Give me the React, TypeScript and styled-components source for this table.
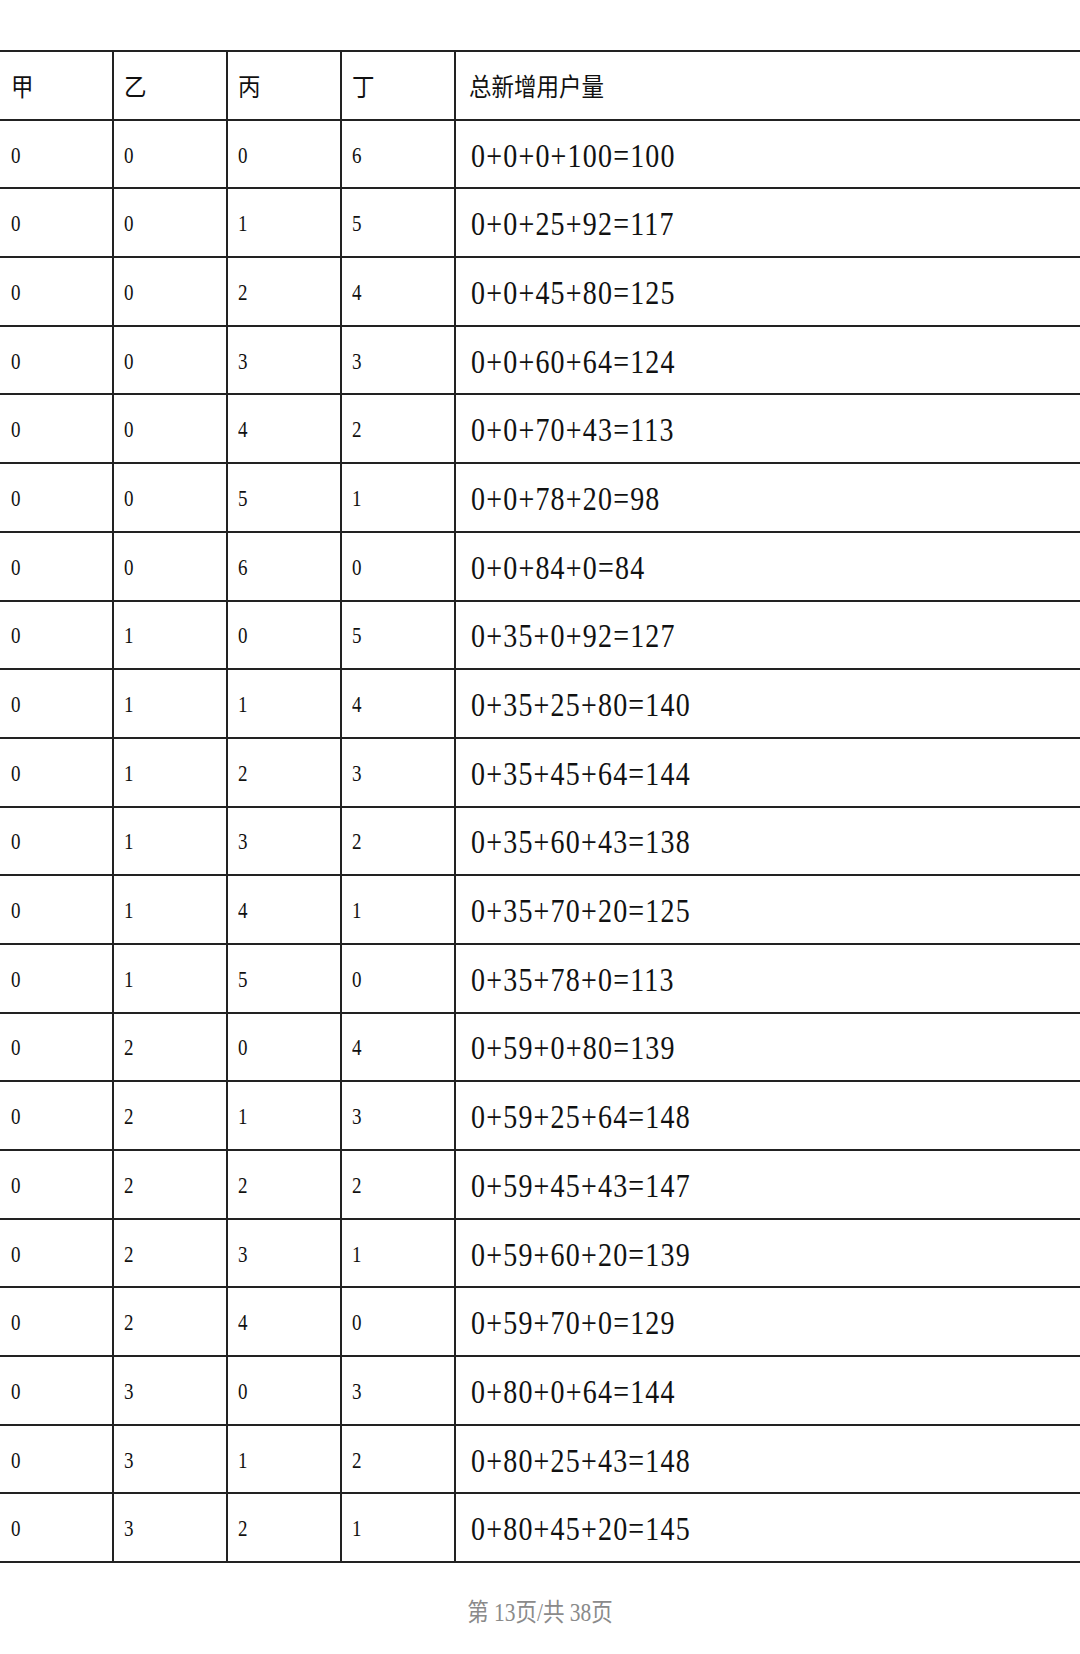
import styled, { createGlobalStyle } from 'styled-components'

const GlobalStyle = createGlobalStyle`
  html, body {
    margin: 0;
    padding: 0;
    background: #ffffff;
  }
  body {
    font-family: "Liberation Serif", "Noto Sans CJK SC", serif;
    color: #111;
  }
`

const Page = styled.div`
  width: 1080px;
  height: 1654px;
  overflow: hidden;
  padding-top: 50px;
  box-sizing: border-box;
`

const Table = styled.div`
  display: grid;
  grid-template-columns: 112px 114px 114px 114px 1fr;
  border-top: 2px solid #222;
`

const Row = styled.div`
  display: contents;
`

const Cell = styled.div<{ $wide?: boolean; $first?: boolean; $head?: boolean }>`
  height: 68.7px;
  box-sizing: border-box;
  border-bottom: 2px solid #222;
  border-left: ${(p) => (p.$first ? 'none' : '2px solid #222')};
  display: flex;
  align-items: center;
  padding-left: ${(p) => (p.$wide ? (p.$head ? '13px' : '15px') : p.$first ? '11px' : '10px')};
  padding-top: ${(p) => (p.$head ? '0' : '3px')};
`

const HeadText = styled.span`
  display: inline-block;
  font-family: "Noto Sans CJK SC", sans-serif;
  font-size: 22.5px;
  transform: scaleY(1.12);
  color: #111;
`

const Num = styled.span`
  display: inline-block;
  font-family: "Liberation Serif", serif;
  font-size: 19px;
  transform: scaleY(1.2);
  color: #111;
`

const Formula = styled.span`
  display: inline-block;
  font-family: "Liberation Serif", serif;
  font-size: 28px;
  letter-spacing: 1.2px;
  transform: scaleY(1.2);
  color: #111;
`

const Footer = styled.div`
  margin-top: 32px;
  text-align: center;
  font-family: "Liberation Serif", "Noto Sans CJK SC", serif;
  font-size: 21.5px;
  color: #8a8a8a;
  transform: scaleY(1.15);
`

const rows: [number, number, number, number, string][] = [
  [0, 0, 0, 6, '0+0+0+100=100'],
  [0, 0, 1, 5, '0+0+25+92=117'],
  [0, 0, 2, 4, '0+0+45+80=125'],
  [0, 0, 3, 3, '0+0+60+64=124'],
  [0, 0, 4, 2, '0+0+70+43=113'],
  [0, 0, 5, 1, '0+0+78+20=98'],
  [0, 0, 6, 0, '0+0+84+0=84'],
  [0, 1, 0, 5, '0+35+0+92=127'],
  [0, 1, 1, 4, '0+35+25+80=140'],
  [0, 1, 2, 3, '0+35+45+64=144'],
  [0, 1, 3, 2, '0+35+60+43=138'],
  [0, 1, 4, 1, '0+35+70+20=125'],
  [0, 1, 5, 0, '0+35+78+0=113'],
  [0, 2, 0, 4, '0+59+0+80=139'],
  [0, 2, 1, 3, '0+59+25+64=148'],
  [0, 2, 2, 2, '0+59+45+43=147'],
  [0, 2, 3, 1, '0+59+60+20=139'],
  [0, 2, 4, 0, '0+59+70+0=129'],
  [0, 3, 0, 3, '0+80+0+64=144'],
  [0, 3, 1, 2, '0+80+25+43=148'],
  [0, 3, 2, 1, '0+80+45+20=145'],
]

const heads = ['甲', '乙', '丙', '丁']

export default function App() {
  return (
    <>
      <GlobalStyle />
      <Page>
        <Table>
          <Row>
            {heads.map((h, i) => (
              <Cell key={h} $first={i === 0} $head>
                <HeadText>{h}</HeadText>
              </Cell>
            ))}
            <Cell $wide $head>
              <HeadText>总新增用户量</HeadText>
            </Cell>
          </Row>
          {rows.map((r, idx) => (
            <Row key={idx}>
              {r.slice(0, 4).map((v, i) => (
                <Cell key={i} $first={i === 0}>
                  <Num>{v}</Num>
                </Cell>
              ))}
              <Cell $wide>
                <Formula>{r[4]}</Formula>
              </Cell>
            </Row>
          ))}
        </Table>
        <Footer>第 13页/共 38页</Footer>
      </Page>
    </>
  )
}
